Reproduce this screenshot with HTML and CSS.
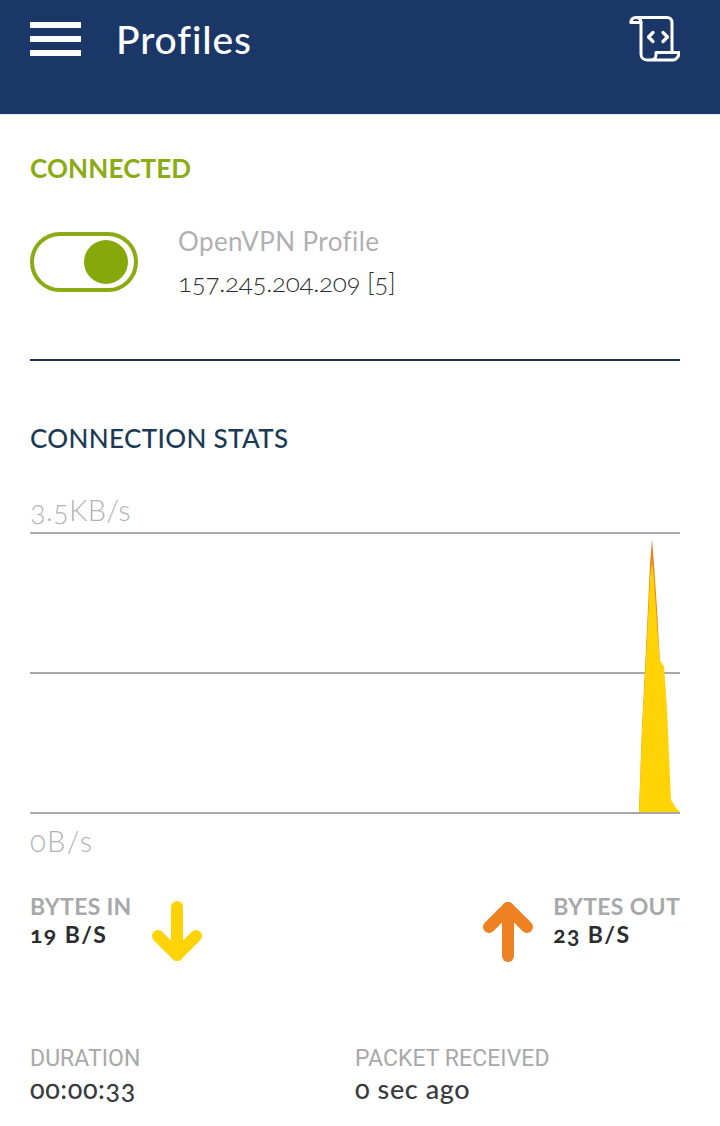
FILE: index.html
```html
<!DOCTYPE html>
<html lang="en">
<head>
<meta charset="utf-8">
<title>Profiles</title>
<link rel="stylesheet" href="styles.css">
</head>
<body>
<header class="appbar">
  <div class="menu"><span></span><span></span><span></span></div>
  <h1 class="title">Profiles</h1>
  <svg class="script-icon" width="52" height="48" viewBox="0 0 52 48" fill="none" stroke="#fff" stroke-width="3" stroke-linecap="round" stroke-linejoin="round">
    <path d="M3 6.5 C3 3 5 1.5 8 1.5 H39 C42 1.5 44 3.5 44 6.5 V36"/>
    <path d="M3 6.5 H13"/>
    <path d="M8 1.5 C11 1.5 13 3.5 13 6.5 V38 C13 41.5 15.5 44 19 44 H45 C48.5 44 51 40 51 36.5 H28 V39 C28 42 25.5 44 22 44"/>
    <path d="M25 16.5 L20.5 21 L25 25.5" stroke-width="3.2"/>
    <path d="M35 16.5 L39.5 21 L35 25.5" stroke-width="3.2"/>
  </svg>
</header>
<main class="content">
  <h2 class="status">CONNECTED</h2>
  <section class="profile">
    <div class="toggle"><span class="knob"></span></div>
    <div class="profile-text">
      <div class="profile-name">OpenVPN Profile</div>
      <div class="profile-ip">157.245.204.209 [5]</div>
    </div>
  </section>
  <h2 class="stats-title">CONNECTION STATS</h2>
  <div class="axis-top">3.5KB/s</div>
  <div class="chart">
    <div class="gridline"></div>
    <div class="gridline"></div>
    <svg class="peak" width="41" height="273" viewBox="0 0 41 274" preserveAspectRatio="none">
      <path fill="#e8841f" d="M0 274 L3 190 L8 90 L11 25 L13 0 L15 25 L18 70 L21 124 L23 180 L30 274 Z"/>
      <path fill="#ffd305" d="M0 274 L3 190 L8 100 L11 40 L13 22 L15 40 L18 85 L21 122 L25 128 L28 170 L32 262 L37 270 L41 274 Z"/>
    </svg>
  </div>
  <div class="axis-bottom">0B/s</div>
  <section class="rates">
    <div class="rate">
      <div class="rate-text">
        <div class="rate-label">BYTES IN</div>
        <div class="rate-value">19 B/S</div>
      </div>
      <svg class="arrow arrow-in" width="50" height="62" viewBox="0 0 50 62" fill="none" stroke="#ffd305" stroke-width="12" stroke-linecap="round" stroke-linejoin="round">
        <path d="M25 6 V54"/>
        <path d="M6 35 L25 54 L44 35"/>
      </svg>
    </div>
    <div class="rate">
      <svg class="arrow arrow-out" width="50" height="62" viewBox="0 0 50 62" fill="none" stroke="#ee8122" stroke-width="12" stroke-linecap="round" stroke-linejoin="round">
        <path d="M25 55 V7"/>
        <path d="M6 26 L25 7 L44 26"/>
      </svg>
      <div class="rate-text">
        <div class="rate-label">BYTES OUT</div>
        <div class="rate-value">23 B/S</div>
      </div>
    </div>
  </section>
  <section class="meta">
    <div class="meta-item">
      <div class="meta-label">DURATION</div>
      <div class="meta-value">00:00:33</div>
    </div>
    <div class="meta-item">
      <div class="meta-label">PACKET RECEIVED</div>
      <div class="meta-value">0 sec ago</div>
    </div>
  </section>
</main>
</body>
</html>
```
FILE: styles.css
```css
* { box-sizing: border-box; }
html, body { margin: 0; padding: 0; }
body {
  width: 720px;
  height: 1126px;
  overflow: hidden;
  background: #fff;
  font-family: "Lato", "Open Sans", sans-serif;
  font-variant-numeric: oldstyle-nums;
}
.appbar {
  height: 115px;
  background: #1b3768;
  border-bottom: 1px solid #e9f0f3;
  padding: 16px 40px 0 30px;
  display: flex;
  align-items: flex-start;
}
.menu {
  width: 51px;
  margin-top: 6px;
  display: flex;
  flex-direction: column;
  gap: 8px;
}
.menu span { display: block; height: 6px; background: #fff; }
.title {
  margin: 0 0 0 35px;
  flex: 1;
  color: #fff;
  font-size: 39px;
  line-height: 46px;
  font-weight: 500;
  letter-spacing: .9px;
}
.script-icon { display: block; }
.content { padding: 0 40px 0 30px; }
.status {
  margin: 37px 0 0;
  font-size: 26px;
  line-height: 32px;
  font-weight: 700;
  letter-spacing: .15px;
  color: #8aab12;
}
.profile {
  display: flex;
  align-items: flex-start;
  margin-top: 48px;
  padding-bottom: 61px;
  border-bottom: 2px solid #1b3550;
}
.toggle {
  width: 108px;
  height: 60px;
  border: 4px solid #8aab12;
  border-radius: 30px;
  display: flex;
  justify-content: flex-end;
  align-items: center;
  padding-right: 6px;
}
.knob { width: 44px; height: 44px; border-radius: 50%; background: #86a80a; }
.profile-text { margin-left: 40px; margin-top: -7px; }
.profile-name { font-size: 26px; line-height: 32px; color: #b0b0b2; font-weight: 400; letter-spacing: .4px; }
.profile-ip { font-size: 26px; line-height: 32px; margin-top: 9px; color: #2c2f33; font-weight: 300; letter-spacing: -.3px; }
.stats-title {
  margin: 61px 0 0;
  font-size: 26px;
  line-height: 32px;
  font-weight: 500;
  letter-spacing: .35px;
  color: #1b3a55;
}
.axis-top, .axis-bottom { font-size: 29px; line-height: 34px; color: #b3b3b5; font-weight: 300; }
.axis-top { margin-top: 39px; letter-spacing: .3px; }
.chart {
  position: relative;
  margin-top: 5px;
  height: 282px;
  display: flex;
  flex-direction: column;
  border-bottom: 2px solid #a9a9a9;
}
.gridline { height: 140px; border-top: 2px solid #a9a9a9; }
.peak { position: absolute; right: 0; bottom: 0; }
.axis-bottom { margin-top: 10px; letter-spacing: 1.4px; }
.rates {
  display: flex;
  justify-content: space-between;
  margin-top: 35px;
}
.rate { display: flex; align-items: flex-start; }
.rate-label { font-size: 23px; line-height: 27px; font-weight: 700; color: #a8a8aa; letter-spacing: .3px; }
.rate-value { font-size: 23px; line-height: 28px; font-weight: 700; color: #2a2c30; letter-spacing: 1.4px; }
.arrow-in { margin: 8px 0 0 20px; }
.arrow-out { margin: 8px 20px 0 0; }
.meta { display: flex; margin-top: 82px; }
.meta-item { width: 325px; }
.meta-label { font-family: "Roboto", sans-serif; font-size: 23px; line-height: 28px; color: #a8a8aa; font-weight: 400; letter-spacing: .05px; }
.meta-value { font-size: 27px; line-height: 32px; color: #3a3c40; font-weight: 500; letter-spacing: .6px; }
```
